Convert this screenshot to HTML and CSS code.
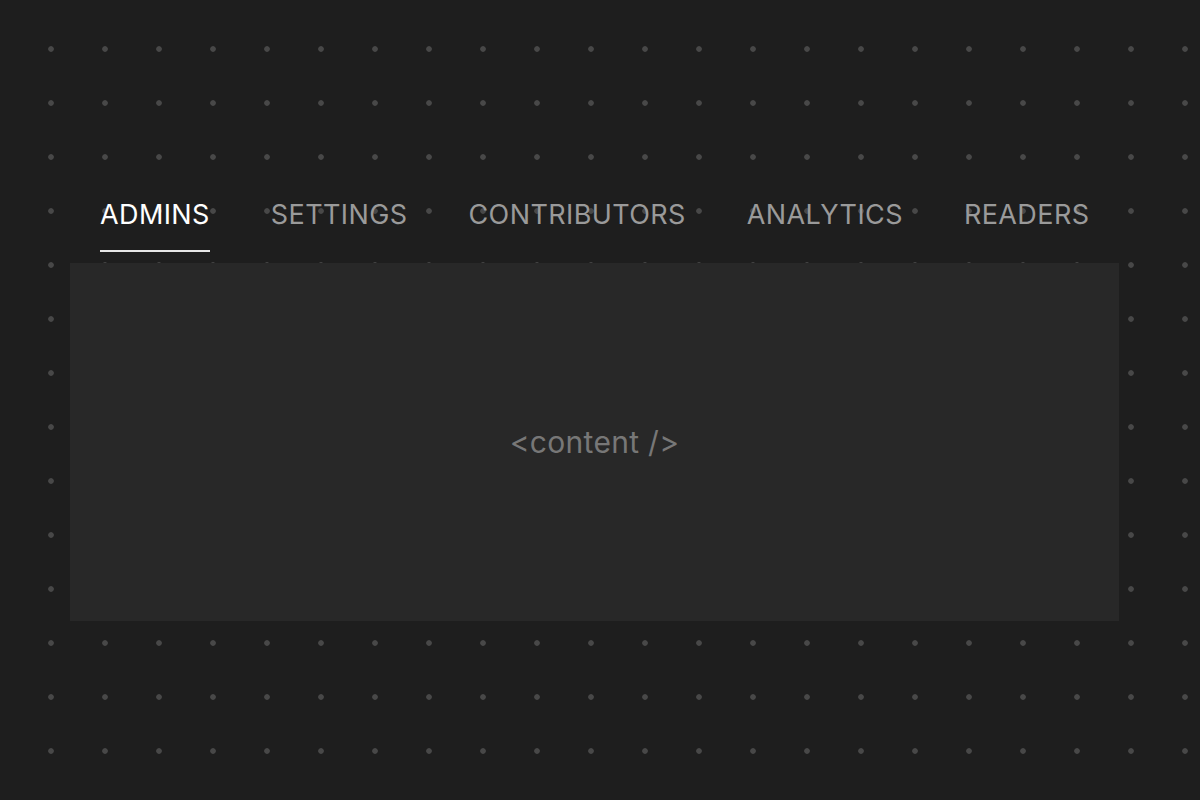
FILE: index.html
```html
<!DOCTYPE html>
<html>
<head>
<meta charset="utf-8">
<link rel="stylesheet" href="styles.css">
</head>
<body>
<div class="wrap">
  <nav class="tabs">
    <div class="tab active">ADMINS</div>
    <div class="tab">SETTINGS</div>
    <div class="tab">CONTRIBUTORS</div>
    <div class="tab">ANALYTICS</div>
    <div class="tab">READERS</div>
  </nav>
  <div class="panel">&lt;content /&gt;</div>
</div>
</body>
</html>
```
FILE: styles.css
```css
html, body {
  margin: 0;
  height: 100%;
}
body {
  background-color: #1e1e1e;
  background-image: radial-gradient(circle at 27px 27px, #484848 2.4px, rgba(72,72,72,0) 3.2px);
  background-size: 54px 54px;
  background-position: 24px 22px;
  font-family: Inter, "Noto Sans", sans-serif;
}
.wrap {
  width: 1049px;
  margin-left: 70px;
  padding-top: 193px;
}
.tabs {
  display: flex;
  gap: 61px;
  padding-left: 30px;
}
.tab {
  font-size: 27px;
  color: #9a9a9a;
  line-height: 44px;
  padding-bottom: 13px;
  border-bottom: 2px solid transparent;
  letter-spacing: 0.4px;
}
.tab.active {
  color: #ffffff;
  border-bottom-color: #e6e6e6;
}
.panel {
  margin-top: 11px;
  height: 358px;
  background: #282828;
  display: flex;
  align-items: center;
  justify-content: center;
  color: #777777;
  font-size: 30px;
  letter-spacing: 0.3px;
}
```
